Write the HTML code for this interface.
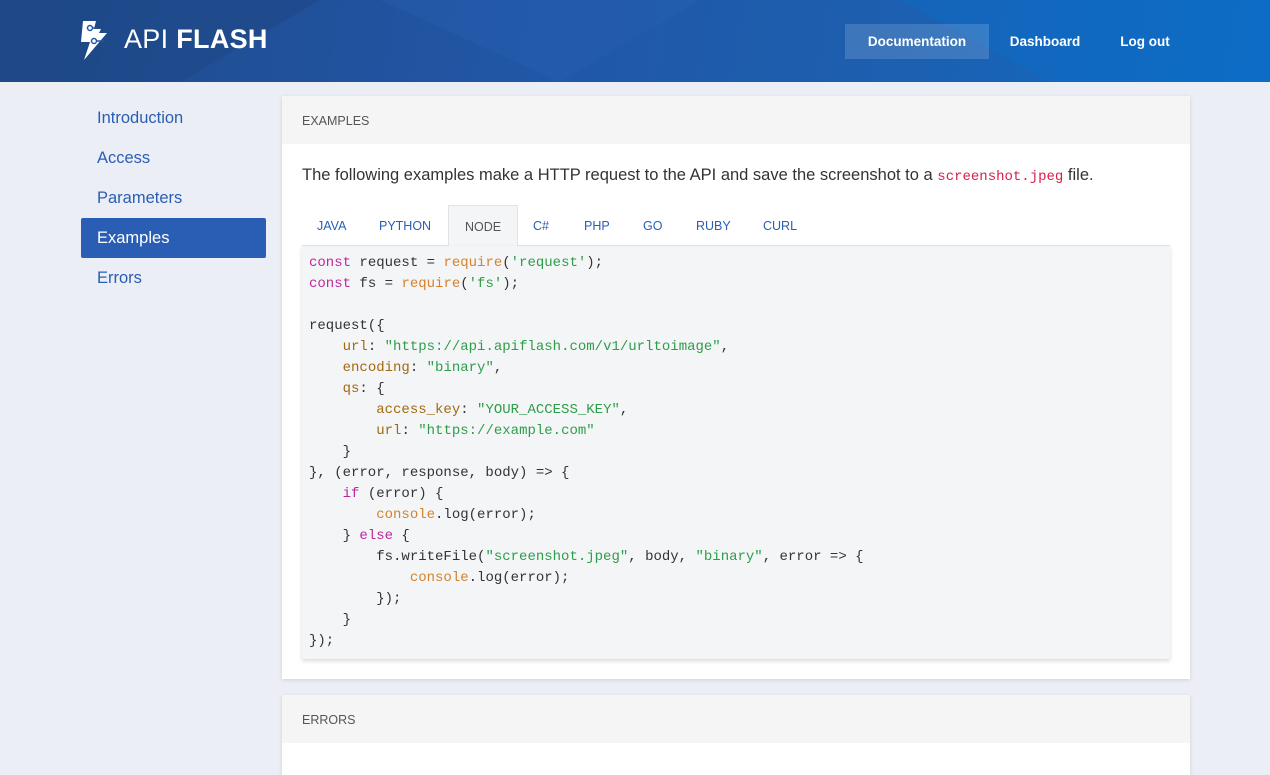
<!DOCTYPE html>
<html><head><meta charset="utf-8"><style>
*{box-sizing:border-box;margin:0;padding:0}
body{width:1270px;height:760px;overflow:hidden;background:#ebeef5;font-family:"Liberation Sans",sans-serif;position:relative}
.hdr{position:absolute;left:0;top:0;width:1270px;height:82px;background:linear-gradient(100deg,#1f4a8c 0%,#2156a5 40%,#1d5fb0 70%,#0f6cc4 100%);overflow:hidden}
.logo{position:absolute;left:124px;top:24px;color:#fff;font-size:27px;letter-spacing:0.3px}
.logo b{font-weight:bold}
.nav a{position:absolute;top:24px;height:35px;line-height:35px;color:#fff;font-weight:bold;font-size:13.5px;text-align:center}
.side a{position:absolute;left:81px;width:185px;height:40px;line-height:41px;padding-left:16px;color:#2a5eb4;font-size:16.5px}
.card{position:absolute;left:282px;width:908px;background:#fff;box-shadow:0 1px 4px rgba(0,0,0,.12)}
.ch{height:48px;background:#f5f5f5;padding-left:20px;line-height:50px;font-size:12.5px;color:#555}
.tabs{position:absolute;left:302px;top:205px;width:868px;height:41px;background:#fff;border-bottom:1px solid #e3e3e3}
.tabs span{position:absolute;top:0;height:41px;line-height:43px;font-size:12.5px;color:#2a5eb4}
pre{position:absolute;left:302px;top:246px;width:868px;height:413px;background:#f4f5f7;font-family:"Liberation Mono",monospace;font-size:14px;line-height:21px;padding:7px 7px;color:#333;box-shadow:0 2px 4px rgba(0,0,0,.15)}
.k{color:#c0279f}.f{color:#d5822b}.s{color:#2e9d4a}.p{color:#a16a10}
</style></head><body>
<div class="hdr">
<svg style="position:absolute;left:0;top:0" width="1270" height="82"><polygon points="0,0 320,0 180,82 0,82" fill="#1d4582" opacity=".5"/><polygon points="380,0 700,0 560,82" fill="#2760b0" opacity=".4"/><polygon points="900,0 1270,0 1270,82 1050,82" fill="#0b6fc8" opacity=".4"/></svg>
<svg style="position:absolute;left:80px;top:20px" width="30" height="42" viewBox="0 0 30 42"><path d="M3 1h13l-2 8h7l-2 4h8L4 40l6-18H1z" fill="#fff"/><circle cx="10" cy="8" r="2.5" fill="none" stroke="#2156a5" stroke-width="1.5"/><circle cx="14" cy="21" r="2.5" fill="none" stroke="#2156a5" stroke-width="1.5"/><path d="M12 8h6M16 21h8" stroke="#2156a5" stroke-width="1.5"/></svg>
<div class="logo">API <b>FLASH</b></div>
<div class="nav"><a style="left:845px;width:144px;background:rgba(255,255,255,.15)">Documentation</a><a style="left:995px;width:100px">Dashboard</a><a style="left:1105px;width:80px">Log out</a></div>
</div>
<div class="side">
<a style="top:98px">Introduction</a><a style="top:138px">Access</a><a style="top:178px">Parameters</a>
<a style="top:218px;background:#2a5eb4;color:#fff;border-radius:2px">Examples</a><a style="top:258px">Errors</a>
</div>
<div class="card" style="top:96px;height:583px"><div class="ch">EXAMPLES</div>
<div style="position:absolute;left:20px;top:70px;font-size:16.5px;color:#333">The following examples make a HTTP request to the API and save the screenshot to a <span style="font-family:'Liberation Mono',monospace;font-size:14px;color:#d6204b">screenshot.jpeg</span> file.</div></div>
<div class="tabs"><span style="left:15px">JAVA</span><span style="left:77px">PYTHON</span><span style="left:146px;width:70px;background:#f4f5f7;border:1px solid #e3e3e3;border-bottom:none;color:#555;text-align:center">NODE</span><span style="left:231px">C#</span><span style="left:282px">PHP</span><span style="left:341px">GO</span><span style="left:394px">RUBY</span><span style="left:461px">CURL</span></div>
<pre><span class="k">const</span> request = <span class="f">require</span>(<span class="s">'request'</span>);
<span class="k">const</span> fs = <span class="f">require</span>(<span class="s">'fs'</span>);

request({
    <span class="p">url</span>: <span class="s">"https://api.apiflash.com/v1/urltoimage"</span>,
    <span class="p">encoding</span>: <span class="s">"binary"</span>,
    <span class="p">qs</span>: {
        <span class="p">access_key</span>: <span class="s">"YOUR_ACCESS_KEY"</span>,
        <span class="p">url</span>: <span class="s">"https://example.com"</span>
    }
}, (error, response, body) =&gt; {
    <span class="k">if</span> (error) {
        <span class="f">console</span>.log(error);
    } <span class="k">else</span> {
        fs.writeFile(<span class="s">"screenshot.jpeg"</span>, body, <span class="s">"binary"</span>, error =&gt; {
            <span class="f">console</span>.log(error);
        });
    }
});</pre>
<div class="card" style="top:695px;height:80px"><div class="ch">ERRORS</div></div>
</body></html>
